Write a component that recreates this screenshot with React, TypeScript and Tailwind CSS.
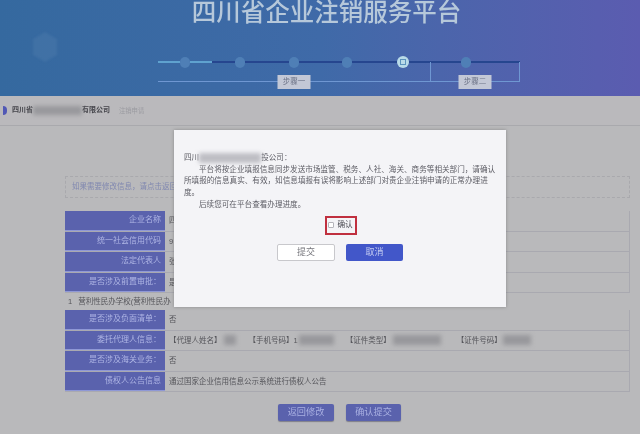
const FONT = "font-['Liberation_Sans','Noto_Sans_CJK_SC',sans-serif]";

function Smear({ className }: { className: string }) {
  return <span className={"inline-block bg-[#98989c] blur-[2px] " + className} />;
}

function Dot({ active }: { active?: boolean }) {
  if (active) {
    return (
      <span className="flex h-[12px] w-[12px] items-center justify-center rounded-full bg-[#b9dbe8]">
        <span className="h-[6px] w-[6px] border border-[#5c93bd]" />
      </span>
    );
  }
  return <span className="h-[11px] w-[10px] rounded-full bg-[#4f7fb6]" />;
}

function Stepper() {
  const dark = "h-[2px] bg-[#26468f]";
  return (
    <div className="ml-[158px] mt-[30px] w-[362px]">
      <div className="flex h-[12px] items-center">
        <span className="h-[2px] w-[22px] bg-[#5fa2cf]" />
        <Dot />
        <span className="h-[2px] w-[22px] bg-[#5fa2cf]" />
        <span className={dark + " w-[23px]"} />
        <Dot />
        <span className={dark + " w-[44px]"} />
        <Dot />
        <span className={dark + " w-[43px]"} />
        <Dot />
        <span className={dark + " w-[45px]"} />
        <Dot active />
        <span className={dark + " w-[52px]"} />
        <Dot />
        <span className={dark + " w-[49px]"} />
      </div>
      <div className="-mt-[6px] flex">
        <div className="relative h-[20px] w-[272px] border-b border-[#6f97d2]">
          <span className="absolute -bottom-[8px] left-1/2 flex h-[14px] w-[33px] -translate-x-1/2 items-center justify-center bg-[#c3c8d6] text-[7.5px] text-[#6d7488]">
            步骤一
          </span>
        </div>
        <div className="relative h-[20px] w-[90px] border-x border-b border-[#6f97d2]">
          <span className="absolute -bottom-[8px] left-1/2 flex h-[14px] w-[33px] -translate-x-1/2 items-center justify-center bg-[#c3c8d6] text-[7.5px] text-[#6d7488]">
            步骤二
          </span>
        </div>
      </div>
    </div>
  );
}

function Row({ label, children }: { label: string; children: React.ReactNode }) {
  return (
    <div className="flex h-[20.5px] border-b border-[#a9a9b0]">
      <div className="flex w-[100px] shrink-0 items-center justify-end border-b border-[#8f98d6] bg-[#5a62ad] pr-[4px] text-[8px] text-[#aeb5e4]">
        {label}
      </div>
      <div className="flex flex-1 items-center whitespace-nowrap border-r border-[#a9a9b0] pl-[4px] text-[7.5px] text-[#55555a]">
        {children}
      </div>
    </div>
  );
}

export default function App() {
  return (
    <div className={"relative h-[434px] w-[640px] overflow-hidden bg-[#b9b9bb] blur-[0.3px] " + FONT}>
      <div className="relative h-[96px] overflow-hidden bg-gradient-to-r from-[#35699f] via-[#3f6aa8] to-[#5b5cb0]">
        <svg className="absolute left-[31px] top-[31px] h-[32px] w-[28px] blur-[1px]" viewBox="0 0 28 32">
          <path d="M14 1 26 8v16l-12 7-12-7V8Z" fill="#6f93bd" fillOpacity="0.18" />
        </svg>
        <h1 className="pl-[13px] text-center text-[24.5px] font-medium leading-[26px] text-[#b6c8da]">
          四川省企业注销服务平台
        </h1>
        <Stepper />
      </div>

      <div className="flex h-[30px] items-center border-b border-[#a9a9ad] bg-[#bab9bc]">
        <span className="ml-[3px] h-[9px] w-[4px] rounded-r-full bg-[#5158b5]" />
        <span className="ml-[5px] flex items-center text-[7px] font-bold text-[#45454b]">
          四川省
          <Smear className="h-[9px] w-[49px]" />
          有限公司
        </span>
        <span className="ml-[9px] text-[6.3px] text-[#9a9aa0]">注销申请</span>
      </div>

      <div className="ml-[65px] mt-[50px] flex h-[22px] w-[565px] items-center border border-dashed border-[#a9a9ad] pl-[6px] text-[7.5px] text-[#8088b0]">
        如果需要修改信息，请点击返回
      </div>

      <div className="ml-[65px] mt-[13px] w-[565px]">
        <Row label="企业名称">四</Row>
        <Row label="统一社会信用代码">9</Row>
        <Row label="法定代表人">张</Row>
        <Row label="是否涉及前置审批：">是</Row>
        <div className="flex h-[17px] items-center gap-[6px] pl-[3px] text-[7.5px] text-[#55555a]">
          <span>1</span>
          <span>营利性民办学校(营利性民办</span>
        </div>
        <Row label="是否涉及负面清单：">否</Row>
        <Row label="委托代理人信息：">
          <span>【代理人姓名】</span>
          <Smear className="ml-[2px] h-[10px] w-[12px]" />
          <span className="ml-[13px]">【手机号码】1</span>
          <Smear className="ml-[1px] h-[10px] w-[35px]" />
          <span className="ml-[12px]">【证件类型】</span>
          <Smear className="ml-[2px] h-[10px] w-[48px]" />
          <span className="ml-[16px]">【证件号码】</span>
          <Smear className="ml-[1px] h-[10px] w-[28px]" />
        </Row>
        <Row label="是否涉及海关业务：">否</Row>
        <Row label="债权人公告信息">通过国家企业信用信息公示系统进行债权人公告</Row>
      </div>

      <div className="ml-[278px] mt-[12px] flex gap-[12px]">
        <button className="h-[17px] w-[56px] rounded-[2px] bg-[#5a62ad] text-[9.2px] leading-none text-[#a9b0e2] shadow-[0_1px_1px_rgba(70,70,90,0.5)]">
          返回修改
        </button>
        <button className="h-[17px] w-[55px] rounded-[2px] bg-[#5a62ad] text-[9.2px] leading-none text-[#a9b0e2] shadow-[0_1px_1px_rgba(70,70,90,0.5)]">
          确认提交
        </button>
      </div>

      <div className="absolute left-[174px] top-[130px] h-[177px] w-[332px] bg-[#f4f4f7] pl-[10px] pr-[9px] pt-[22px] text-[7.6px] leading-[11.7px] text-[#5c5c64] shadow-[0_0_3px_rgba(90,90,90,0.5)]">
        <p className="flex items-center">
          四川
          <Smear className="h-[10px] w-[62px] bg-[#bdbdc3]" />
          投公司：
        </p>
        <p className="indent-[15px]">
          平台将按企业填报信息同步发送市场监管、税务、人社、海关、商务等相关部门，请确认所填报的信息真实、有效，如信息填报有误将影响上述部门对贵企业注销申请的正常办理进度。
        </p>
        <p className="indent-[15px]">后续您可在平台查看办理进度。</p>
        <div className="mt-[5px] flex justify-center">
          <label className="flex h-[19px] w-[32px] items-center justify-center gap-[3px] border-2 border-[#c0303f] text-[7.6px] text-[#4c4c54]">
            <span className="h-[6px] w-[6px] rounded-[1px] border border-[#b5b5bb] bg-white" />
            确认
          </label>
        </div>
        <div className="ml-[93px] mt-[9px] flex gap-[11px]">
          <button className="h-[17px] w-[58px] rounded-[2px] border border-[#c8c8cc] bg-white text-[9px] leading-none text-[#77777d]">
            提交
          </button>
          <button className="h-[17px] w-[57px] rounded-[2px] bg-[#4257c9] text-[9px] leading-none text-[#c5cdf2]">
            取消
          </button>
        </div>
      </div>
    </div>
  );
}
